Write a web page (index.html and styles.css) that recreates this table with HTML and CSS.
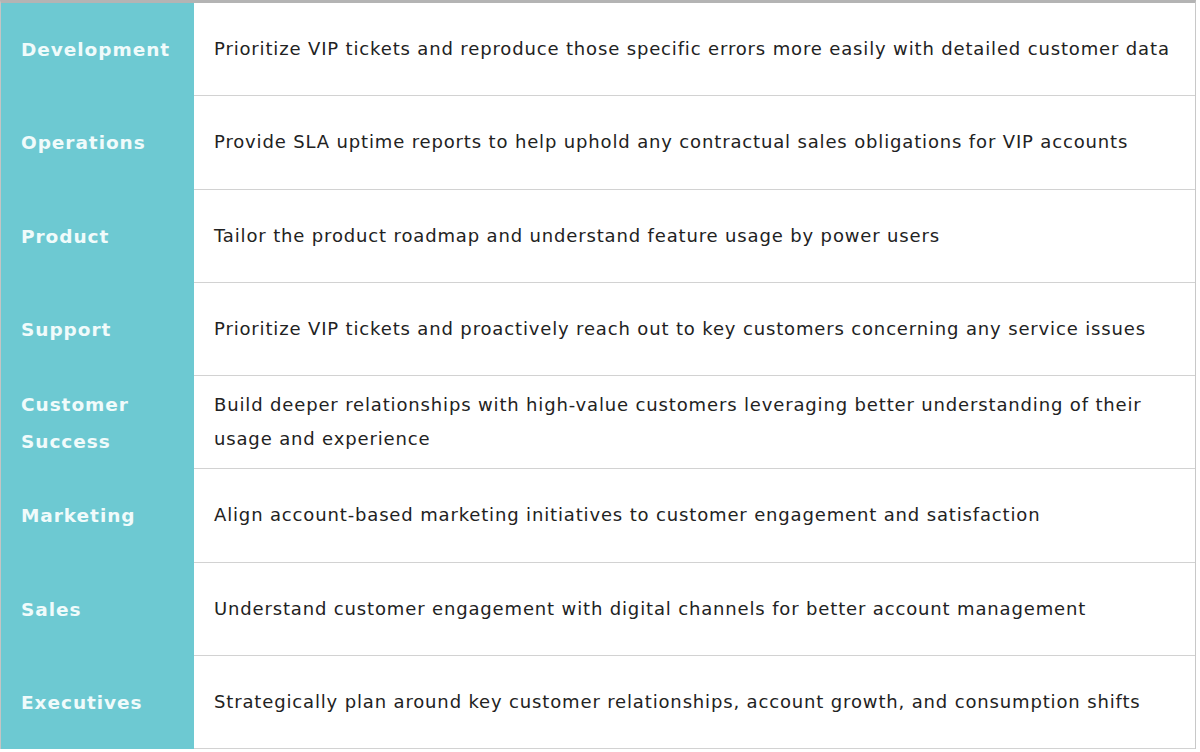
FILE: index.html
```html
<!DOCTYPE html>
<html lang="en">
<head>
<meta charset="utf-8">
<title>Teams</title>
<link rel="stylesheet" href="styles.css">
</head>
<body>
<div class="table">
  <div class="row"><div class="label">Development</div><div class="desc">Prioritize VIP tickets and reproduce those specific errors more easily with detailed customer data</div></div>
  <div class="row"><div class="label">Operations</div><div class="desc">Provide SLA uptime reports to help uphold any contractual sales obligations for VIP accounts</div></div>
  <div class="row"><div class="label">Product</div><div class="desc">Tailor the product roadmap and understand feature usage by power users</div></div>
  <div class="row"><div class="label">Support</div><div class="desc">Prioritize VIP tickets and proactively reach out to key customers concerning any service issues</div></div>
  <div class="row"><div class="label">Customer Success</div><div class="desc">Build deeper relationships with high-value customers leveraging better understanding of their usage and experience</div></div>
  <div class="row"><div class="label">Marketing</div><div class="desc">Align account-based marketing initiatives to customer engagement and satisfaction</div></div>
  <div class="row"><div class="label">Sales</div><div class="desc">Understand customer engagement with digital channels for better account management</div></div>
  <div class="row"><div class="label">Executives</div><div class="desc">Strategically plan around key customer relationships, account growth, and consumption shifts</div></div>
</div>
</body>
</html>
```
FILE: styles.css
```css
html, body {
  margin: 0;
  padding: 0;
  background: #ffffff;
}
.table {
  width: 1196px;
  box-sizing: border-box;
  border-top: 3px solid #b4b4b4;
  border-left: 1px solid #c4c4c4;
  border-right: 1px solid #c8c8c8;
  display: flex;
  flex-direction: column;
  font-family: "DejaVu Sans", sans-serif;
}
.row {
  display: grid;
  grid-template-columns: 193px 1fr;
  height: 93.25px;
}
.label {
  background: #6dc9d2;
  color: #f0fbfb;
  font-weight: 700;
  font-size: 18.5px;
  letter-spacing: 0.95px;
  line-height: 37px;
  padding: 0 20px 0 20px;
  display: flex;
  align-items: center;
}
.desc {
  box-sizing: border-box;
  border-bottom: 1px solid #d2d2d2;
  color: #222222;
  font-size: 18px;
  letter-spacing: 0.85px;
  line-height: 34px;
  padding: 0 20px 0 20px;
  display: flex;
  align-items: center;
}
```
